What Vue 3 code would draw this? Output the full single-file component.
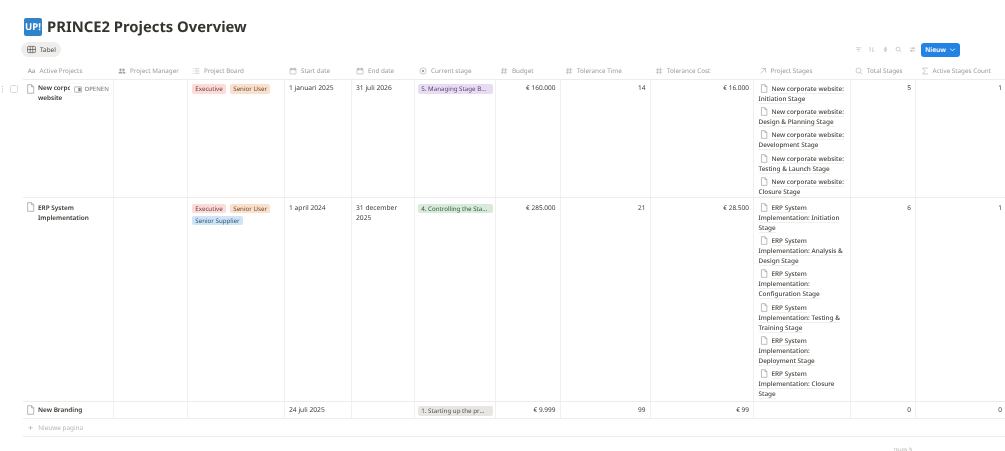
<script setup>
const columns = [
  { name: 'Active Projects', icon: 'aa' },
  { name: 'Project Manager', icon: 'people' },
  { name: 'Project Board', icon: 'list' },
  { name: 'Start date', icon: 'cal' },
  { name: 'End date', icon: 'cal' },
  { name: 'Current stage', icon: 'status' },
  { name: 'Budget', icon: 'hash' },
  { name: 'Tolerance Time', icon: 'hash' },
  { name: 'Tolerance Cost', icon: 'hash' },
  { name: 'Project Stages', icon: 'arrow' },
  { name: 'Total Stages', icon: 'search' },
  { name: 'Active Stages Count', icon: 'sigma' }
]

const rows = [
  {
    title: 'New corporate website',
    hover: true,
    board: [['Executive', 'red'], ['Senior User', 'orange']],
    start: '1 januari 2025',
    end: '31 juli 2026',
    stage: ['5. Managing Stage Boundaries', 'purple'],
    budget: '€ 160.000',
    time: '14',
    cost: '€ 16.000',
    stages: [
      'New corporate website: Initiation Stage',
      'New corporate website: Design & Planning Stage',
      'New corporate website: Development Stage',
      'New corporate website: Testing & Launch Stage',
      'New corporate website: Closure Stage'
    ],
    total: '5',
    active: '1'
  },
  {
    title: 'ERP System Implementation',
    board: [['Executive', 'red'], ['Senior User', 'orange'], ['Senior Supplier', 'blue']],
    start: '1 april 2024',
    end: '31 december 2025',
    stage: ['4. Controlling the Stage', 'green'],
    budget: '€ 285.000',
    time: '21',
    cost: '€ 28.500',
    stages: [
      'ERP System Implementation: Initiation Stage',
      'ERP System Implementation: Analysis & Design Stage',
      'ERP System Implementation: Configuration Stage',
      'ERP System Implementation: Testing & Training Stage',
      'ERP System Implementation: Deployment Stage',
      'ERP System Implementation: Closure Stage'
    ],
    total: '6',
    active: '1'
  },
  {
    title: 'New Branding',
    board: [],
    start: '24 juli 2025',
    end: '',
    stage: ['1. Starting up the project', 'gray'],
    budget: '€ 9.999',
    time: '99',
    cost: '€ 99',
    stages: [],
    total: '0',
    active: '0'
  }
]
</script>

<template>
  <div class="page">
    <header class="title-row">
      <div class="logo">UP!</div>
      <h1>PRINCE2 Projects Overview</h1>
    </header>

    <div class="toolbar">
      <div class="view-pill">
        <svg class="i" viewBox="0 0 16 16"><rect x="1" y="2.500" width="14" height="11" rx="1.500" /><path d="M1 8h14M5.800 2.500v11M10.200 2.500v11" /></svg>
        <span>Tabel</span>
      </div>
      <div class="actions">
        <svg class="a" viewBox="0 0 16 16"><path d="M2 4h12M4.5 8h7M6.5 12h3" /></svg>
        <svg class="a" viewBox="0 0 16 16"><path d="M5 13V3L2.8 5.2M11 3v10l2.2-2.2" /></svg>
        <svg class="a" viewBox="0 0 16 16"><path d="M9 2 4.5 9H8l-1 5 4.5-7H8z" /></svg>
        <svg class="a" viewBox="0 0 16 16"><circle cx="7" cy="7" r="4.5" /><path d="m10.4 10.4 3.6 3.6" /></svg>
        <svg class="a" viewBox="0 0 16 16"><path d="M2 5h12M2 11h12" /><circle cx="10" cy="5" r="1.4" /><circle cx="6" cy="11" r="1.4" /></svg>
        <div class="new-btn">
          <span>Nieuw</span>
          <svg viewBox="0 0 10 10"><path d="m2.5 4 2.5 2.5L7.5 4" /></svg>
        </div>
      </div>
    </div>

    <div class="table">
      <div class="row head">
        <div v-for="c in columns" :key="c.name" class="hcell">
          <span v-if="c.icon === 'aa'" class="aa">Aa</span>
          <svg v-else class="hi" viewBox="0 0 16 16">
            <template v-if="c.icon === 'people'">
              <g class="fill"><circle cx="5" cy="5.5" r="2.4" /><circle cx="11" cy="5.5" r="2.4" /><path d="M0.8 13c0-2.6 1.8-4 4.2-4s4 1.4 4 4zM10 13c0-1.500-.4-2.800-1.200-3.700.6-.2 1.300-.3 2.200-.3 2.400 0 4.200 1.400 4.200 4z" /></g>
            </template>
            <template v-else-if="c.icon === 'list'">
              <path d="M5.500 3.500h9M5.500 8h9M5.500 12.500h9M1.500 3.500h1.500M1.500 8h1.500M1.500 12.500h1.500" />
            </template>
            <template v-else-if="c.icon === 'cal'">
              <rect x="2" y="3" width="12" height="11" rx="1" /><path class="thick" d="M2 5.500h12M4.500 1.500v2M11.500 1.500v2" />
            </template>
            <template v-else-if="c.icon === 'status'">
              <circle cx="8" cy="8" r="6.300" /><circle class="fill" cx="8" cy="8" r="2.500" />
            </template>
            <template v-else-if="c.icon === 'hash'">
              <path d="M6 1.500 4.500 14.500M11.500 1.500 10 14.500M2 5.500h12.500M1.500 10.500H14" />
            </template>
            <template v-else-if="c.icon === 'arrow'">
              <path d="M3 13 13 3M5 3h8v8" />
            </template>
            <template v-else-if="c.icon === 'search'">
              <circle cx="7" cy="7" r="5" /><path d="m10.700 10.700 4 4" />
            </template>
            <template v-else>
              <path d="M13 3V2H3l5.500 6L3 14h10v-1" />
            </template>
          </svg>
          <span>{{ c.name }}</span>
        </div>
      </div>

      <div v-for="r in rows" :key="r.title" class="row body">
        <div v-if="r.hover" class="gutter">
          <svg class="dots" viewBox="0 0 6 12"><circle cx="3" cy="2" r=".8" /><circle cx="3" cy="6" r=".8" /><circle cx="3" cy="10" r=".8" /></svg>
          <span class="check"></span>
        </div>
        <div class="cell title-cell">
          <svg class="doc" viewBox="0 0 12 14"><path d="M2 1h5.500L10.500 4v9H2zM7.500 1v3h3" /></svg>
          <span>{{ r.title }}</span>
          <div v-if="r.hover" class="open-btn">
            <svg viewBox="0 0 12 10"><rect x=".5" y="1" width="11" height="8" rx="1" /><rect class="solid" x="6.500" y="2.500" width="3.500" height="5" /></svg>
            <span>OPENEN</span>
          </div>
        </div>
        <div class="cell"></div>
        <div class="cell tags">
          <span v-for="t in r.board" :key="t[0]" class="tag" :class="t[1]">{{ t[0] }}</span>
        </div>
        <div class="cell">{{ r.start }}</div>
        <div class="cell">{{ r.end }}</div>
        <div class="cell stage-cell">
          <span class="tag stage" :class="r.stage[1]"><span class="stage-text">{{ r.stage[0] }}</span></span>
        </div>
        <div class="cell num">{{ r.budget }}</div>
        <div class="cell num">{{ r.time }}</div>
        <div class="cell num">{{ r.cost }}</div>
        <div class="cell links">
          <div v-for="s in r.stages" :key="s" class="link">
            <svg class="doc small" viewBox="0 0 12 14"><path d="M2 1h5.500L10.500 4v9H2zM7.500 1v3h3" /></svg>
            <span>{{ s }}</span>
          </div>
        </div>
        <div class="cell num">{{ r.total }}</div>
        <div class="cell num last">{{ r.active }}</div>
      </div>

      <div class="add-row">
        <span class="plus">+</span>
        <span>Nieuwe pagina</span>
      </div>

      <div class="row footer">
        <div class="count"><small>TELLEN</small> <span>3</span></div>
      </div>
    </div>
  </div>
</template>

<style>
html, body { margin: 0; background: #fff; overflow: hidden; }
</style>

<style scoped>
.page {
  width: 1005px;
  height: 451px;
  overflow: hidden;
  font-family: "Noto Sans", "Open Sans", sans-serif;
  text-rendering: geometricPrecision;
  filter: blur(.3px);
  color: #37352f;
  font-size: 6.700px;
  line-height: 10px;
  box-sizing: border-box;
  padding-top: 18px;
}
svg { fill: none; stroke: currentColor; stroke-width: 1.100; display: block; flex: none; }
.title-row { display: flex; align-items: center; gap: 5px; padding-left: 24px; height: 18px; }
.logo {
  width: 18px; height: 18px; border-radius: 2px; background: #2f83c6; color: #fff;
  font: 700 9.500px/18px "Noto Sans", sans-serif; text-align: center;
}
h1 { margin: 0; font: 700 14.800px/20px "Noto Sans", sans-serif; color: #37352f; white-space: nowrap; }
.toolbar { display: flex; justify-content: space-between; align-items: center; height: 15px; margin-top: 6px; padding: 0 45px 0 21px; }
.view-pill {
  display: flex; align-items: center; gap: 4px; height: 15px; width: 40px; box-sizing: border-box;
  padding-left: 6px; border-radius: 8px; background: #efeeec; color: #45433e; font-size: 6.400px;
}
.i { width: 9px; height: 9px; }
.actions { display: flex; align-items: center; color: #a5a4a0; }
.a { width: 7px; height: 7px; margin-right: 6.500px; stroke-width: 1.200; }
.new-btn {
  display: flex; align-items: center; justify-content: space-between; width: 39px; height: 14px; margin-left: -1px; box-sizing: border-box;
  padding: 0 3px 0 4px; border-radius: 3px; background: #2383e2; color: #fff; font-weight: 600;
}
.new-btn svg { width: 9px; height: 9px; stroke-width: 1; }
.table { margin: 6px 0 0 23px; width: 1000px; }
.row {
  display: grid;
  grid-template-columns: 90.500px 74px 97px 67px 63px 81px 65px 90px 103.500px 96.500px 65.500px 90px;
  position: relative;
}
.head { height: 17px; border-bottom: 1px solid #edece9; box-sizing: border-box; }
.hcell { display: flex; align-items: center; gap: 3px; padding-left: 4.500px; color: #9b9a97; white-space: nowrap; overflow: hidden; font-size: 6.300px; }
.hi { width: 8px; height: 8px; margin-right: 1px; color: #a3a29e; }
.aa { width: 8px; margin-right: 1px; font-weight: 500; text-align: center; }
.fill { fill: currentColor; stroke: none; }
.thick { stroke-width: 1.600; }
.body { border-bottom: 1px solid #edece9; }
.cell {
  position: relative; box-sizing: border-box; min-width: 0;
  border-right: 1px solid #f1f0ee; padding: 3.300px 4px 0 4.500px; min-height: 16.600px; color: #3f3d38;
}
.cell.title-cell { padding-left: 15px; font-weight: 600; font-size: 6.400px; padding-right: 15px; color: #37352f; }
.title-cell .doc { position: absolute; left: 3px; top: 3.500px; width: 9px; height: 10px; }
.doc { width: 8px; height: 9px; color: #8f8e8a; stroke-width: .9; }
.num { text-align: right; font-size: 6.500px; }
.last { border-right: 0; }
.tags { display: flex; flex-wrap: wrap; align-content: flex-start; gap: 2.300px 4px; padding-top: 4.300px; }
.tag {
  display: inline-block; height: 9.700px; line-height: 9.700px; padding: 0 3.300px; border-radius: 2px; white-space: nowrap; font-size: 6.200px;
}
.red { background: #fbdcd9; color: #6f3a36; }
.orange { background: #fae1cd; color: #6f4a2c; }
.blue { background: #cfe4f7; color: #2f5773; }
.purple { background: #e8dcf2; color: #5e4478; }
.green { background: #d8ead9; color: #2f5a3c; }
.gray { background: #e7e6e3; color: #55534e; }
.stage-cell { padding-left: 3.500px; padding-top: 4.300px; }
.stage { display: block; width: 74.500px; box-sizing: border-box; }
.stage-text { display: block; overflow: hidden; text-overflow: ellipsis; padding-right: 1.500px; }
.links { padding-top: 4px; padding-right: 2px; padding-bottom: .3px; line-height: 10.100px; }
.link { margin-bottom: 3px; font-weight: 500; color: #45433e; font-size: 6.400px; }
.link:last-child { margin-bottom: 0; }
.link span { border-bottom: 1px solid #f0efed; }
.doc.small { display: inline-block; vertical-align: -2px; margin: 0 4px 0 1px; }
.body:nth-child(3) .cell { padding-top: 4.300px; }
.body:nth-child(3) .links { padding-top: 4.500px; padding-bottom: 1.100px; }
.body:nth-child(3) .tags { padding-top: 5.300px; }
.body:nth-child(3) .stage-cell { padding-top: 5.300px; }
.gutter { position: absolute; left: -23px; top: 4.500px; display: flex; align-items: center; gap: 5px; }
.dots { width: 5px; height: 8px; fill: #a5a4a0; stroke: none; }
.check { width: 8px; height: 8px; box-sizing: border-box; border: 1px solid #dcdbd8; border-radius: 1.500px; background: #fff; }
.open-btn {
  position: absolute; left: 46.500px; top: 3.500px; width: 41.500px; height: 11.500px; box-sizing: border-box;
  display: flex; align-items: center; gap: 2.500px; padding-left: 4.500px;
  background: #fff; border-radius: 3px; box-shadow: 0 0 2px rgba(15,15,15,.1);
  color: #85847f; font-size: 6px; font-weight: 500;
}
.open-btn svg { width: 8px; height: 7px; stroke-width: .9; }
.solid { fill: currentColor; stroke: none; }
.add-row {
  display: flex; align-items: center; gap: 5px; height: 18px; padding-left: 5px; box-sizing: border-box;
  border-bottom: 1px solid #edece9; color: #b6b5b1; font-size: 6.400px;
}
.plus { font-size: 9px; }
.footer { height: 16px; }
.count { grid-column: 11; display: flex; justify-content: flex-end; align-items: flex-end; gap: 1.500px; height: 16.500px; padding-right: 4px; color: #a5a4a0; font-size: 6px; line-height: 7px; }
.count small { font-size: 3.800px; }
</style>
